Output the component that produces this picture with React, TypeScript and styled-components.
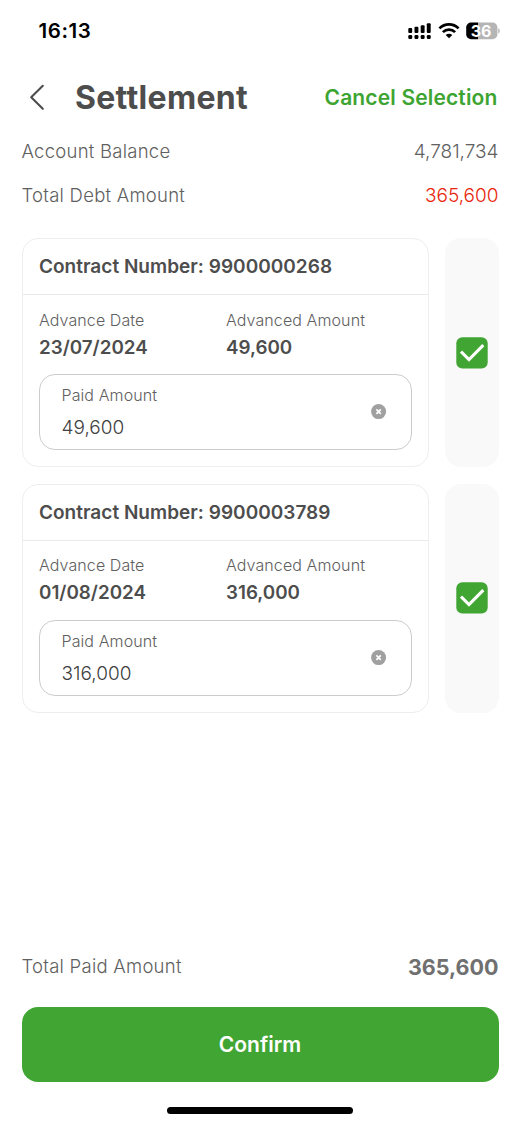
import React from 'react';
import styled, { createGlobalStyle } from 'styled-components';

const Global = createGlobalStyle`
  * { box-sizing: border-box; }
  body { margin: 0; background: #fff; font-family: Inter, "Liberation Sans", sans-serif; color: #4d4d4d; }
`;

const Screen = styled.main`
  height: 1125px;
  display: flex;
  flex-direction: column;
  padding: 0 21.5px;
  overflow: hidden;
`;

const StatusBar = styled.div`
  display: flex;
  justify-content: space-between;
  align-items: center;
  height: 62px;
  padding: 0 0 0 17px;
  margin-right: -1.5px;
`;

const Clock = styled.span`
  font-size: 20.5px;
  font-weight: 600;
  letter-spacing: 0.55px;
  line-height: 24px;
  color: #000;
`;

const StatusIcons = styled.svg`
  display: block;
  width: 94px;
  height: 24px;
`;

const Header = styled.header`
  display: flex;
  align-items: center;
  height: 70px;
`;

const BackButton = styled.button`
  border: 0;
  background: none;
  padding: 0 0 0 6.5px;
  width: 53.5px;
  display: flex;
`;

const Title = styled.h1`
  margin: 1px 0 0;
  flex: 1;
  font-size: 32px;
  font-weight: 700;
  line-height: 40px;
  letter-spacing: 0.3px;
`;

const TextAction = styled.button`
  border: 0;
  background: none;
  padding: 1px 1px 0 0;
  font: 600 21px/28px Inter, sans-serif;
  letter-spacing: 0.15px;
  color: #3da431;
  white-space: nowrap;
`;

const SummaryRow = styled.div<{ $height: number }>`
  display: flex;
  justify-content: space-between;
  align-items: center;
  height: ${p => p.$height}px;
`;

const Label = styled.span<{ $raised?: boolean }>`
  font-size: 18.5px;
  font-weight: 300;
  letter-spacing: 0.25px;
  line-height: 24px;
  padding-bottom: ${p => (p.$raised ? 2 : 0)}px;
  color: #606060;
`;

const Value = styled.span<{ $color?: string; $bold?: boolean }>`
  font-size: ${p => (p.$bold ? 21.5 : 19)}px;
  font-weight: ${p => (p.$bold ? 700 : 300)};
  line-height: 24px;
  padding-top: ${p => (p.$bold ? 0 : 2)}px;
  color: ${p => p.$color ?? (p.$bold ? '#707070' : '#606060')};
`;

const ContractList = styled.div`
  display: flex;
  flex-direction: column;
  gap: 16.6px;
  margin-top: 19px;
`;

const ContractRow = styled.div`
  display: flex;
  gap: 16.5px;
  height: 229px;
`;

const Card = styled.section`
  width: 407px;
  border: 1px solid #eeeeee;
  border-radius: 16px;
`;

const CardTitle = styled.h2`
  margin: 0;
  height: 56px;
  padding: 0 16.5px;
  border-bottom: 1px solid #eaeaea;
  font-size: 19px;
  font-weight: 600;
  letter-spacing: 0.02px;
  line-height: 56px;
`;

const Facts = styled.div`
  display: grid;
  grid-template-columns: 187px 1fr;
  padding: 11.8px 16.5px 0;
`;

const FactLabel = styled.div`
  font-size: 16px;
  font-weight: 300;
  letter-spacing: 0.1px;
  line-height: 27px;
  color: #606060;
`;

const FactValue = styled.div`
  font-size: 18.8px;
  font-weight: 600;
  line-height: 27.4px;
`;

const Field = styled.label`
  display: flex;
  align-items: center;
  justify-content: space-between;
  height: 76px;
  margin: 12.8px 16px 0;
  padding: 0 24px 0 22px;
  border: 1px solid #cccccc;
  border-radius: 16px;
`;

const FieldText = styled.div`
  line-height: 32px;
`;

const FieldLabel = styled.div`
  font-size: 16px;
  font-weight: 300;
  letter-spacing: 0.1px;
  line-height: 31px;
  color: #606060;
`;

const FieldValue = styled.div`
  font-size: 19px;
  font-weight: 300;
  line-height: 33px;
  color: #404040;
`;

const SelectPanel = styled.div`
  width: 53.5px;
  border-radius: 16px;
  background: #f9f9f9;
  display: flex;
  align-items: center;
  justify-content: center;
`;

const Bottom = styled.footer`
  margin-top: auto;
  height: 181px;
`;

const Confirm = styled.button`
  display: block;
  width: 100%;
  height: 75px;
  margin-top: 17px;
  padding: 0;
  border: 0;
  border-radius: 16px;
  background: #41a533;
  color: #fff;
  font: 600 21px/75px Inter, sans-serif;
`;

const HomeIndicator = styled.div`
  width: 186px;
  height: 7px;
  border-radius: 4px;
  background: #000;
  margin: 25px auto 0;
`;

const contracts = [
  { number: '9900000268', date: '23/07/2024', amount: '49,600' },
  { number: '9900003789', date: '01/08/2024', amount: '316,000' },
];

const signalBars = [
  { x: 2.3, top: 9 },
  { x: 8.5, top: 7.7 },
  { x: 14.7, top: 6.2 },
  { x: 20.8, top: 4.2 },
];

const DeviceStatus = () => (
  <StatusIcons viewBox="0 0 94 24">
    {signalBars.map(b => (
      <g key={b.x}>
        <rect x={b.x} y={b.top} width="3.9" height={14 - b.top} rx="1.1" />
        <rect x={b.x} y="16" width="3.9" height="4" rx="1.2" />
      </g>
    ))}
    <g fill="none" stroke="#000" strokeWidth="2.7">
      <path d="M33.4 9.4C38.8 4.1 47.2 4.1 52.6 9.4" />
      <path d="M36.9 13.1C40.3 9.8 45.7 9.8 49.1 13.1" />
    </g>
    <path d="M39.7 15.9C41.6 14.2 44.4 14.2 46.3 15.9L43 19.2Z" />
    <path d="M65 3.5h7.2v16.7H65a4.8 4.8 0 0 1-4.8-4.8V8.3A4.8 4.8 0 0 1 65 3.5Z" />
    <path d="M72.2 3.5h14.4a4.8 4.8 0 0 1 4.8 4.8v7.1a4.8 4.8 0 0 1-4.8 4.8H72.2Z" fill="#b5b5b5" />
    <path d="M92.2 9.2c2.1.7 2.1 4.6 0 5.3Z" fill="#b5b5b5" />
    <text x="75" y="17.6" textAnchor="middle" fontSize="16" fontWeight="700" fill="#fff">36</text>
  </StatusIcons>
);

const ClearIcon = () => (
  <svg width="16" height="16" viewBox="0 0 16 16">
    <circle cx="7.6" cy="7.6" r="7.5" fill="#a0a0a0" />
    <path d="M5.4 5.4l4.4 4.4M9.8 5.4l-4.4 4.4" stroke="#fff" strokeWidth="1.7" />
  </svg>
);

const CheckBox = () => (
  <svg width="32" height="32" viewBox="0 0 32 32">
    <rect x="0.3" y="0.2" width="31.4" height="31.2" rx="6" fill="#41a533" />
    <path d="M5 14.7L13 22.5L27.3 8.2" fill="none" stroke="#fff" strokeWidth="3.1" />
  </svg>
);

export default function App() {
  return (
    <Screen>
      <Global />
      <StatusBar>
        <Clock>16:13</Clock>
        <DeviceStatus />
      </StatusBar>
      <Header>
        <BackButton aria-label="Back">
          <svg width="20" height="28" viewBox="0 0 20 28"><path d="M14.8 2.8L3.2 14.3l11.6 11.5" fill="none" stroke="#4d4d4d" strokeWidth="2.1" strokeLinecap="round" strokeLinejoin="round" /></svg>
        </BackButton>
        <Title>Settlement</Title>
        <TextAction>Cancel Selection</TextAction>
      </Header>
      <SummaryRow $height={38}><Label>Account Balance</Label><Value>4,781,734</Value></SummaryRow>
      <SummaryRow $height={49}><Label>Total Debt Amount</Label><Value $color="#e8260a">365,600</Value></SummaryRow>
      <ContractList>
        {contracts.map(c => (
          <ContractRow key={c.number}>
            <Card>
              <CardTitle>Contract Number: {c.number}</CardTitle>
              <Facts>
                <FactLabel>Advance Date</FactLabel><FactLabel>Advanced Amount</FactLabel>
                <FactValue>{c.date}</FactValue><FactValue>{c.amount}</FactValue>
              </Facts>
              <Field>
                <FieldText><FieldLabel>Paid Amount</FieldLabel><FieldValue>{c.amount}</FieldValue></FieldText>
                <ClearIcon />
              </Field>
            </Card>
            <SelectPanel><CheckBox /></SelectPanel>
          </ContractRow>
        ))}
      </ContractList>
      <Bottom>
        <SummaryRow $height={46}><Label $raised>Total Paid Amount</Label><Value $bold>365,600</Value></SummaryRow>
        <Confirm>Confirm</Confirm>
        <HomeIndicator />
      </Bottom>
    </Screen>
  );
}
